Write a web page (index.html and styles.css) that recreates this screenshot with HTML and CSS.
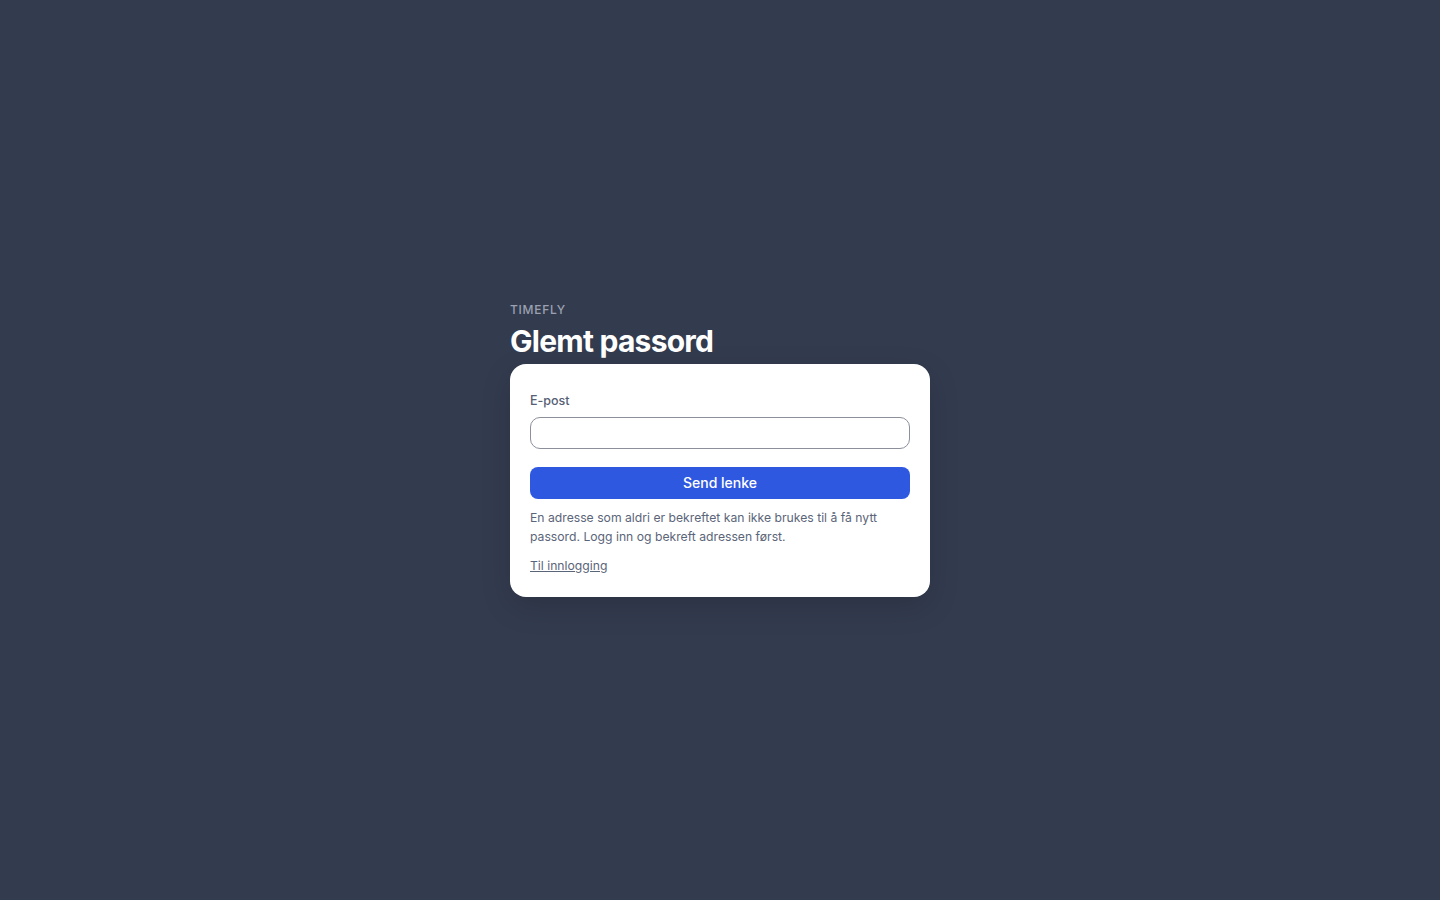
FILE: index.html
```html
<!DOCTYPE html>
<html lang="nb">
<head>
    <meta charset="UTF-8">
    <meta name="viewport" content="width=device-width, initial-scale=1.0">
    <title>Glemt passord – Timefly</title>
    <link rel="stylesheet" href="styles.css">
</head>
<body>
    <main class="auth">
        <div class="brand">TIMEFLY</div>
        <h1>Glemt passord</h1>
        <form class="card" onsubmit="return false;">
            <label for="email">E-post</label>
            <input type="email" id="email" autocomplete="email">
            <button type="submit">Send lenke</button>
            <p class="hint">En adresse som aldri er bekreftet kan ikke brukes til å få nytt passord. Logg inn og bekreft adressen først.</p>
            <a href="#" class="back">Til innlogging</a>
        </form>
    </main>
</body>
</html>
```

FILE: styles.css
```css
* {
    box-sizing: border-box;
}

body {
    margin: 0;
    height: 100vh;
    display: flex;
    align-items: center;
    justify-content: center;
    background: #333b4f;
    font-family: Inter, "Noto Sans", sans-serif;
    color: #fff;
}

.auth {
    width: 420px;
    display: flex;
    flex-direction: column;
    margin-top: -3px;
}

.brand {
    font-size: 12px;
    font-weight: 500;
    letter-spacing: 0.06em;
    color: #9ba1b1;
    line-height: 18px;
}

h1 {
    margin: 2px 0 3px;
    font-size: 30px;
    font-weight: 700;
    letter-spacing: -0.025em;
    line-height: 40px;
}

.card {
    background: #fff;
    border-radius: 16px;
    padding: 28px 20px 22px;
    display: flex;
    flex-direction: column;
    box-shadow: 0 10px 30px rgba(0, 0, 0, 0.15);
}

label {
    font-size: 12.5px;
    font-weight: 500;
    color: #566074;
    line-height: 18px;
    margin-bottom: 7px;
}

input {
    height: 32px;
    border: 1px solid #8b909b;
    border-radius: 10px;
    padding: 0 10px;
    font: inherit;
    font-size: 14px;
    outline: none;
}

input:focus {
    border-color: #2f58e0;
}

button {
    margin-top: 18px;
    height: 32px;
    border: none;
    border-radius: 8px;
    background: #2f58e1;
    color: #fff;
    font: inherit;
    font-size: 14px;
    font-weight: 500;
    cursor: pointer;
}

button:hover {
    background: #2549c4;
}

.hint {
    margin: 9px 0 0;
    font-size: 12.2px;
    line-height: 19px;
    color: #5b6579;
}

.back {
    margin-top: 11px;
    font-size: 12.2px;
    line-height: 18px;
    color: #5b6579;
    align-self: flex-start;
}
```
